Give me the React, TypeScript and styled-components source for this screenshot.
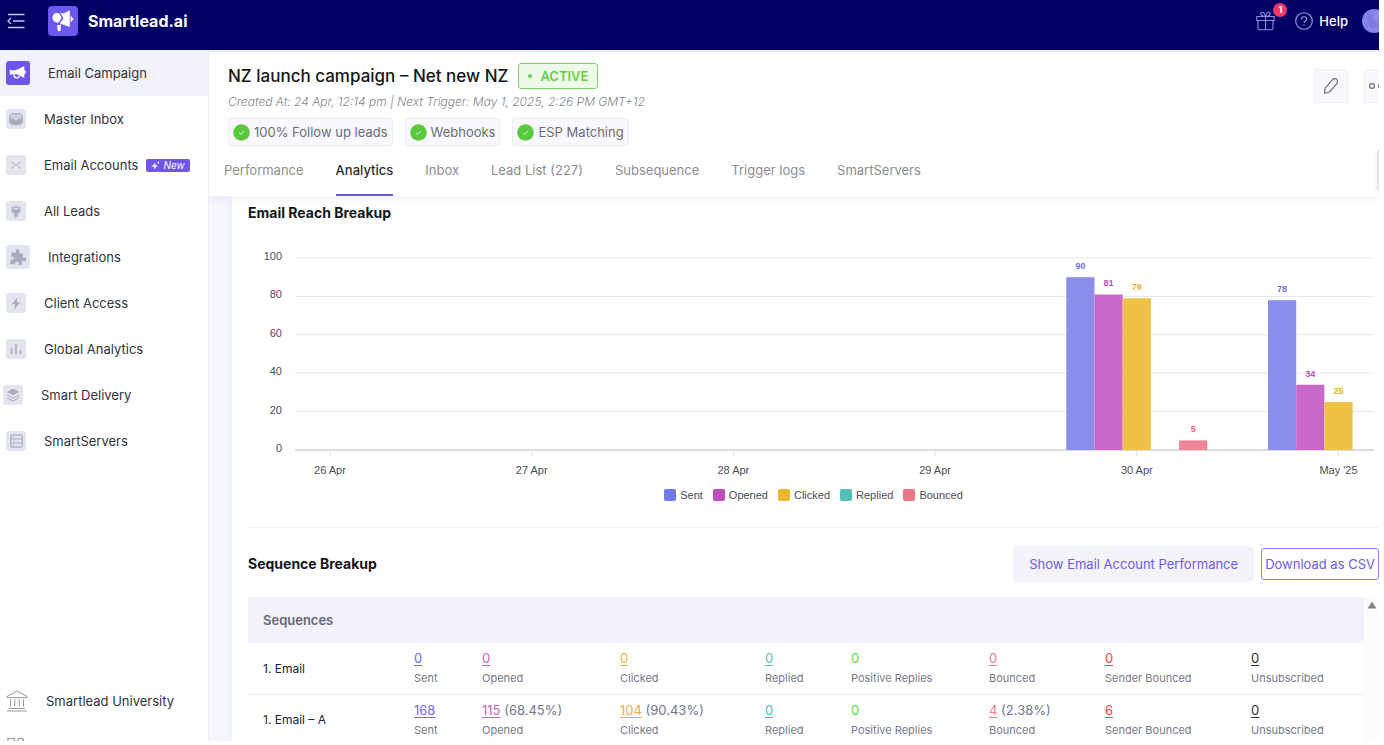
import React from "react";
import styled, { createGlobalStyle } from "styled-components";

const sans = `Inter, "Liberation Sans", sans-serif`;
const plain = `"Liberation Sans", Arial, sans-serif`;

const GlobalStyle = createGlobalStyle`
  *, *::before, *::after { box-sizing: border-box; }
  body { margin: 0; background: #fff; font-family: ${sans}; font-size: 14px; color: #2e323c; }
  button { font-family: inherit; cursor: pointer; }
  a { text-decoration: none; }
  svg { display: block; flex: none; }
`;

const Shell = styled.div`
  display: flex;
  flex-direction: column;
  height: 100vh;
  padding: 0 5px 4px 0;
  overflow: hidden;
`;

const TopBar = styled.header`
  flex: none;
  display: flex;
  align-items: center;
  height: 50px;
  padding: 0 0 8px 6px;
  background: #010163;
  color: #fff;
  overflow: hidden;
`;

const BareButton = styled.button`
  position: relative;
  display: flex;
  align-items: center;
  gap: 6px;
  padding: 0;
  border: 0;
  background: none;
  color: inherit;
  font-size: 13px;
  font-weight: 500;
`;

const Brand = styled.a`
  display: flex;
  align-items: center;
  gap: 10px;
  margin-left: 22px;
  color: #fff;
  font-size: 16px;
  font-weight: 700;
`;

const TopActions = styled.div`
  display: flex;
  align-items: center;
  margin-left: auto;
  margin-right: -7px;
`;

const HelpButton = styled(BareButton)`
  margin: 0 14px 0 20px;
`;

const CountBadge = styled.span`
  position: absolute;
  top: -8px;
  right: -12px;
  width: 14px;
  height: 14px;
  border-radius: 50%;
  background: #fb3767;
  font-size: 9px;
  line-height: 14px;
  font-weight: 700;
  text-align: center;
`;

const Body = styled.div`
  flex: 1;
  display: flex;
  min-height: 0;
`;

const Sidebar = styled.nav`
  flex: none;
  display: flex;
  flex-direction: column;
  width: 209px;
  border-right: 1px solid #ededf3;
  overflow: hidden;
`;

const NavGroup = styled.div<{ $bottom?: boolean }>`
  flex: none;
  margin-top: ${(p) => (p.$bottom ? "auto" : "0")};
  margin-bottom: ${(p) => (p.$bottom ? "-29px" : "0")};
`;

const NavItem = styled.a<{ $active?: boolean; $inset?: number }>`
  display: flex;
  align-items: center;
  gap: 18px;
  height: 46px;
  padding-left: ${(p) => p.$inset ?? 6}px;
  background: ${(p) => (p.$active ? "#f2f2fb" : "transparent")};
  color: #30343e;
  font-size: 13px;
`;

const NavText = styled.span`
  display: flex;
  align-items: center;
  gap: 8px;
  white-space: nowrap;
`;

const NewTag = styled.span`
  display: flex;
  align-items: center;
  gap: 3px;
  height: 13px;
  padding: 0 5px;
  border-radius: 2px;
  background: #6e56e8;
  color: #fff;
  font-size: 10px;
  font-style: italic;
`;

const Tile = styled.span<{ $large?: boolean; $active?: boolean }>`
  display: grid;
  place-items: center;
  width: ${(p) => (p.$large ? 24 : 20)}px;
  height: ${(p) => (p.$large ? 24 : 20)}px;
  border-radius: 3px;
  background: ${(p) => (p.$active ? "#6e56e8" : "#e3e4ee")};
  color: ${(p) => (p.$active ? "#fff" : "#a9abc0")};
`;

const Main = styled.main`
  flex: 1;
  display: flex;
  flex-direction: column;
  min-width: 0;
  overflow: hidden;
  background: #f6f7fd;
`;

const CampaignHead = styled.section`
  position: relative;
  flex: none;
  display: flex;
  justify-content: space-between;
  height: 146px;
  border-top: 2px solid #e9f0fc;
  background: #fff;
  box-shadow: 0 2px 8px rgba(40, 40, 80, 0.07);
  z-index: 1;
`;

const HeadInfo = styled.div`
  display: flex;
  flex-direction: column;
  padding: 11px 0 0 19px;
`;

const TitleRow = styled.div`
  display: flex;
  align-items: center;
  gap: 10px;
`;

const Title = styled.h1`
  margin: 0;
  color: #14151a;
  font-size: 17px;
  line-height: 25px;
  font-weight: 500;
  white-space: nowrap;
`;

const StatusBadge = styled.span`
  display: flex;
  align-items: center;
  gap: 8px;
  height: 26px;
  padding: 0 9px;
  border: 1px solid #7fd366;
  border-radius: 3px;
  background: #eefbe9;
  color: #66cf48;
  font-size: 13px;
  font-weight: 600;

  &::before {
    content: "";
    width: 4px;
    height: 4px;
    border-radius: 50%;
    background: currentColor;
  }
`;

const Meta = styled.p`
  margin: 5px 0 8px;
  color: #85868c;
  font-size: 12px;
  line-height: 16px;
  font-style: italic;
  font-weight: 300;
  white-space: nowrap;
`;

const Chips = styled.div`
  display: flex;
  gap: 12px;
`;

const Chip = styled.span`
  display: flex;
  align-items: center;
  gap: 4px;
  height: 28px;
  padding: 0 4px;
  border: 1px solid #ebebf2;
  border-radius: 4px;
  background: #f9f9fd;
  color: #6b6c78;
  font-size: 13px;
  white-space: nowrap;
`;

const Tabs = styled.nav`
  display: flex;
  gap: 32px;
  margin: auto 0 0 -4px;
`;

const Tab = styled.a<{ $active?: boolean }>`
  height: 38px;
  border-bottom: 2px solid ${(p) => (p.$active ? "#6e56d8" : "transparent")};
  color: ${(p) => (p.$active ? "#2b2d38" : "#8d8d92")};
  font-size: 13px;
  line-height: 24px;
  font-weight: ${(p) => (p.$active ? 500 : 400)};
  white-space: nowrap;
`;

const HeadActions = styled.div`
  display: flex;
  gap: 16px;
  margin: 17px -19px 0 0;
`;

const SquareButton = styled.button`
  display: grid;
  place-items: center;
  width: 34px;
  height: 34px;
  padding: 0;
  border: 1px solid #efeff6;
  border-radius: 2px;
  background: #f9f9fd;
  color: #6c6c86;
`;

const SideHandle = styled.span`
  position: absolute;
  right: 0;
  top: 98px;
  width: 2px;
  height: 40px;
  background: #e4e4e7;
  box-shadow: 0 0 4px rgba(0, 0, 0, 0.12);
`;

const Card = styled.div`
  flex: none;
  margin-left: 23px;
  padding-left: 16px;
  background: #fff;
  box-shadow: 0 0 12px rgba(80, 90, 150, 0.08);
`;

const SectionTitle = styled.h2`
  margin: 0;
  color: #14151a;
  font-size: 14px;
  line-height: 20px;
  font-weight: 700;
`;

const ChartSection = styled.section`
  padding-top: 7px;
  border-bottom: 1px solid #f0f0f3;
`;

const Chart = styled.svg`
  width: 100%;
  height: auto;
  font-family: ${plain};
`;

const Legend = styled.ul`
  display: flex;
  justify-content: center;
  gap: 10px;
  margin: 0;
  padding: 0 0 25px;
  list-style: none;
  color: #4b4d52;
  font-family: ${plain};
  font-size: 11px;
  line-height: 14px;
`;

const LegendItem = styled.li<{ $color: string }>`
  display: flex;
  align-items: center;
  gap: 4px;

  &::before {
    content: "";
    width: 12px;
    height: 12px;
    border-radius: 2px;
    background: ${(p) => p.$color};
  }
`;

const SequenceBar = styled.div`
  display: flex;
  align-items: center;
  gap: 7px;
  height: 69px;
  padding-top: 2px;

  ${SectionTitle} { margin-right: auto; }
`;

const ActionButton = styled.button<{ $outline?: boolean }>`
  height: ${(p) => (p.$outline ? 32 : 36)}px;
  padding: 0 ${(p) => (p.$outline ? 3 : 15)}px;
  border: 1px solid ${(p) => (p.$outline ? "#8f7df0" : "#f3f3fb")};
  border-radius: 3px;
  background: ${(p) => (p.$outline ? "#fff" : "#f3f3fb")};
  color: #6f5be0;
  font-size: 13px;
  white-space: nowrap;
`;

const TableArea = styled.div`
  display: flex;
`;

const ScrollRail = styled.div`
  flex: none;
  width: 15px;
  padding: 4px 0 0 3px;
  background: #fcfcfc;
`;

const Table = styled.table`
  flex: 1;
  width: 100%;
  table-layout: fixed;
  border-collapse: collapse;
`;

const HeadCell = styled.th`
  height: 46px;
  padding: 0 0 0 15px;
  background: #f2f2fb;
  color: #666877;
  font-size: 13px;
  font-weight: 600;
  text-align: left;
`;

const NameCell = styled.th`
  height: 51px;
  padding: 0 0 0 15px;
  border-bottom: 1px solid #ededf0;
  color: #22242b;
  font-size: 12px;
  font-weight: 400;
  text-align: left;
`;

const StatCell = styled.td`
  padding: 0;
  border-bottom: 1px solid #ededf0;
  white-space: nowrap;
`;

const Value = styled.div`
  color: #74768a;
  font-size: 13px;
  line-height: 20px;
`;

const ValueLink = styled.a<{ $color: string }>`
  color: ${(p) => p.$color};
  text-decoration: underline;
  text-underline-offset: 2px;
`;

const ValueText = styled.span<{ $color: string }>`
  color: ${(p) => p.$color};
`;

const StatLabel = styled.div`
  color: #777988;
  font-size: 11px;
  line-height: 20px;
`;

/* ---------- icons ---------- */

const MenuIcon = () => (
  <svg width="20" height="16" viewBox="0 0 20 16" fill="none" stroke="#c5c6ee" strokeWidth="1.3">
    <path d="M2 1.5h16.5M7 8h11.5M2 14.5h16.5M5 5 2 8l3 3" />
  </svg>
);

const LogoIcon = () => (
  <svg width="30" height="30" viewBox="0 0 30 30">
    <rect width="30" height="30" rx="4" fill="#6c58f0" />
    <g fill="#fff">
      <path d="M4.500 11.600C4.500 8.800 6.500 6.900 9 6.900c1 0 1.900.3 2.600.8L13.600 11.800 10.800 16.600C7.500 17.300 4.500 15 4.500 11.600Z" />
      <path d="M12.300 6.600 15.500 7.600 21.800 4.200V21L11.800 17.600 15.500 12.200Z" />
      <path d="M22.600 9.600 25.600 13.200 22.600 16.600Z" />
      <path d="M9 19.300 12.800 18.600V24q0 1.300-1.600 1.300T9.500 24Z" />
    </g>
  </svg>
);

const GiftIcon = () => (
  <svg width="19" height="20" viewBox="0 0 19 20" fill="none" stroke="#8f8fe0" strokeWidth="1.1">
    <path d="M.8 5.500h17.400v4H.8ZM2 9.500h15v7.500q0 1.800-1.800 1.800H3.800Q2 18.800 2 17ZM9.500 5.500v13.300M9.500 5.500C4 5.500 4 1.200 6.300 1.200S9.500 5.500 9.500 5.500s1-4.300 3.200-4.300S15 5.500 9.500 5.500Z" />
  </svg>
);

const HelpIcon = () => (
  <svg width="18" height="18" viewBox="0 0 18 18" fill="none" stroke="#a5a5e8" strokeWidth="1.1">
    <circle cx="9" cy="9" r="8.300" />
    <path d="M6.500 7.200C6.500 3.900 11.600 4 11.600 7 11.600 8.900 9 8.900 9 11M9 12.300v1.300" />
  </svg>
);

const Avatar = () => (
  <svg width="24" height="24" viewBox="0 0 24 24">
    <circle cx="12" cy="12" r="12" fill="#8682e6" />
    <path d="M5 5q5 1 6 7l6 4-7 4q-4-6-5-15Z" fill="#7c78e0" />
    <path d="M13 2l6 3v7l-6-3Z" fill="#918eed" />
  </svg>
);

const MegaphoneGlyph = () => (
  <svg width="18" height="14" viewBox="0 0 18 14" fill="currentColor">
    <path d="M.8 3.600 2.800 4.500C7 4.500 11 3 14 .6h1.300v3.300c2 .5 2 3.800 0 4.300v3.300H14C12 10 9.700 8.900 7.500 8.300L2.800 8.200.8 9.200Z" />
    <path d="M5 8.300c-.6 4 5 4.800 5.400 1.200" fill="none" stroke="currentColor" strokeWidth="1.300" />
  </svg>
);

const InboxGlyph = () => (
  <svg width="14" height="12" viewBox="0 0 14 12">
    <rect x=".6" y=".6" width="12.800" height="10.800" rx="3.500" fill="#cfd0de" stroke="#a9abc0" />
    <path d="M.6 5.500h3.600q.7 2 2.800 2t2.800-2h3.600v3q0 3-3 3H3.600q-3 0-3-3Z" fill="currentColor" />
  </svg>
);

const MailGlyph = () => (
  <svg width="12" height="10" viewBox="0 0 12 10" fill="none" stroke="currentColor">
    <path d="M.8 1.500 6 5.500l5.200-4M.8 9 4 6M11.200 9 8 6" />
  </svg>
);

const FunnelGlyph = () => (
  <svg width="12" height="13" viewBox="0 0 12 13" fill="currentColor">
    <path d="M1 4.500h10q0 2.700-3.200 4.200v2.500L4.500 13V8.700Q1 7.500 1 4.500Z" />
    <circle cx="3" cy="2.800" r="1.300" />
    <circle cx="6" cy="1.700" r="1.300" />
    <circle cx="9" cy="2.800" r="1.300" />
  </svg>
);

const PuzzleGlyph = () => (
  <svg width="17" height="17" viewBox="0 0 17 17" fill="currentColor">
    <path d="M1 4.300h4.200C4 1.500 5.200.5 6.600.5s2.700 1 1.500 3.200l4.500.6v4c2.400-1.200 3.900-.3 3.900 1.300s-1.500 2.500-3.900 1.400V16H9.200c.8-2.200-.2-3.400-1.500-3.400S5.300 14 6 16H1v-4.200c2 .3 2.900-.6 2.900-1.800S3 8.200 1 8.600Z" transform="rotate(8 8.500 8.500)" />
  </svg>
);

const BoltGlyph = () => (
  <svg width="10" height="13" viewBox="0 0 10 13" fill="currentColor">
    <path d="M6.500.3.800 7.200h3.500L3 12.700l6.200-7.200H5.600Z" />
  </svg>
);

const BarsGlyph = () => (
  <svg width="12" height="12" viewBox="0 0 12 12" fill="none" stroke="currentColor" strokeWidth="1.600" strokeLinecap="round">
    <path d="M1.500 6v4.500M6 1.500v9M10.500 7.500v3" />
  </svg>
);

const LayersGlyph = () => (
  <svg width="14" height="14" viewBox="0 0 14 14">
    <path d="M7 .8 13.200 4 7 7.200.8 4Z" fill="currentColor" />
    <path d="M.8 7 7 10.200 13.200 7M.8 9.800 7 13l6.200-3.200" fill="none" stroke="currentColor" />
  </svg>
);

const ServerGlyph = () => (
  <svg width="13" height="14" viewBox="0 0 13 14" fill="none" stroke="currentColor" strokeWidth="1.200">
    <rect x=".8" y=".8" width="11.400" height="12.400" rx="1.500" />
    <path d="M.8 5h11.400M.8 9h11.400M3 3h1.200M3 7h1.200M3 11.200h1.200" />
  </svg>
);

const UniversityIcon = () => (
  <svg width="22" height="22" viewBox="0 0 22 22" fill="none" stroke="#96989f" strokeWidth="1">
    <path d="M1 6.500 11 1l10 5.500v1.200H1ZM4.500 9.500v7M8.800 9.500v7M13.200 9.500v7M17.500 9.500v7M3 18.500h16M1 21h20" />
  </svg>
);

const AppsIcon = () => (
  <svg width="22" height="22" viewBox="0 0 22 22" fill="none" stroke="#96989f" strokeWidth="1.200">
    <rect x="2" y="2.500" width="6.500" height="6.500" />
    <circle cx="14.500" cy="5.700" r="3.300" />
    <rect x="2" y="12.500" width="6.500" height="6.500" />
    <rect x="11.300" y="12.500" width="6.500" height="6.500" />
  </svg>
);

const SparkleIcon = () => (
  <svg width="9" height="9" viewBox="0 0 9 9" fill="#fff">
    <path d="M3.700 1.500 4.600 4 7.200 5 4.600 5.900 3.700 8.500 2.800 5.900.2 5 2.800 4ZM7.300.2 7.700 1.300 8.800 1.800 7.700 2.200 7.300 3.300 6.900 2.200 5.800 1.800 6.900 1.300Z" />
  </svg>
);

const CheckIcon = () => (
  <svg width="17" height="17" viewBox="0 0 17 17">
    <circle cx="8.500" cy="8.500" r="8.300" fill="#5ac83c" />
    <path d="M6 8.700 7.800 10.300 11 7" fill="none" stroke="#d9f5d1" strokeWidth="1" />
  </svg>
);

const PencilIcon = () => (
  <svg width="16" height="18" viewBox="0 0 16 18" fill="none" stroke="currentColor" strokeWidth="1.200">
    <path d="M1.500 16.300 1.900 11.700 9.800 2.300Q10.300 1.700 11.200 1.700L13.300 2Q14.500 2.900 14.500 4.200L14.200 6.200 6.500 15Z" />
  </svg>
);

const MoreIcon = () => (
  <svg width="26" height="8" viewBox="0 0 26 8" fill="none" stroke="currentColor" strokeWidth="1.200">
    <circle cx="4" cy="4" r="2.400" />
    <circle cx="13" cy="4" r="2.400" />
    <circle cx="22" cy="4" r="2.400" />
  </svg>
);

const ArrowUp = () => (
  <svg width="10" height="8" viewBox="0 0 10 8">
    <path d="M5 .5 9.500 7.500H.5Z" fill="#858588" />
  </svg>
);

/* ---------- data ---------- */

type NavEntry = { label: string; glyph: React.ReactNode; large?: boolean; active?: boolean; inset?: number; isNew?: boolean };

const navEntries: NavEntry[] = [
  { label: "Email Campaign", glyph: <MegaphoneGlyph />, large: true, active: true },
  { label: "Master Inbox", glyph: <InboxGlyph /> },
  { label: "Email Accounts", glyph: <MailGlyph />, isNew: true },
  { label: "All Leads", glyph: <FunnelGlyph /> },
  { label: "Integrations", glyph: <PuzzleGlyph />, large: true },
  { label: "Client Access", glyph: <BoltGlyph /> },
  { label: "Global Analytics", glyph: <BarsGlyph /> },
  { label: "Smart Delivery", glyph: <LayersGlyph />, inset: 3 },
  { label: "SmartServers", glyph: <ServerGlyph /> },
];

const chips = ["100% Follow up leads", "Webhooks", "ESP Matching"];
const tabs = ["Performance", "Analytics", "Inbox", "Lead List (227)", "Subsequence", "Trigger logs", "SmartServers"];

const series = [
  { name: "Sent", legend: "#7079e8", fill: "#8b8dea", text: "#6c6fe6" },
  { name: "Opened", legend: "#bd50bd", fill: "#c968c8", text: "#bb4cbb" },
  { name: "Clicked", legend: "#ecb52d", fill: "#efc246", text: "#e8ad2c" },
  { name: "Replied", legend: "#51bfba", fill: "#6fcac6", text: "#51bfba" },
  { name: "Bounced", legend: "#e87687", fill: "#ec8797", text: "#e8697d" },
];

const days = [
  { label: "26 Apr", values: [0, 0, 0, 0, 0] },
  { label: "27 Apr", values: [0, 0, 0, 0, 0] },
  { label: "28 Apr", values: [0, 0, 0, 0, 0] },
  { label: "29 Apr", values: [0, 0, 0, 0, 0] },
  { label: "30 Apr", values: [90, 81, 79, 0, 5] },
  { label: "May '25", values: [78, 34, 25, 0, 0] },
];

const columns = [
  { label: "Sent", color: "#7468e8", width: 68 },
  { label: "Opened", color: "#c763c4", width: 138 },
  { label: "Clicked", color: "#ecae3c", width: 145 },
  { label: "Replied", color: "#51bfb4", width: 86 },
  { label: "Positive Replies", color: "#52dc45", width: 138, plain: true },
  { label: "Bounced", color: "#ec7a90", width: 116 },
  { label: "Sender Bounced", color: "#f5404a", width: 146 },
  { label: "Unsubscribed", color: "#2c2c30" },
];

const rows: { name: string; cells: [string, string?][] }[] = [
  { name: "1. Email", cells: [["0"], ["0"], ["0"], ["0"], ["0"], ["0"], ["0"], ["0"]] },
  {
    name: "1. Email – A",
    cells: [["168"], ["115", "(68.45%)"], ["104", "(90.43%)"], ["0"], ["0"], ["4", "(2.38%)"], ["6"], ["0"]],
  },
];

/* ---------- chart ---------- */

const BASE = 227;
const UNIT = 1.92;
const BAR = 28.2;

const ReachChart = () => (
  <Chart viewBox="0 0 1131 265" role="img" aria-label="Email reach by day">
    {[0, 20, 40, 60, 80, 100].map((v) => (
      <g key={v}>
        <line x1="47" x2="1126" y1={BASE - v * UNIT} y2={BASE - v * UNIT} stroke={v ? "#e6e6e9" : "#dcdce0"} strokeWidth={v ? 1 : 2} />
        <text x="34" y={BASE - v * UNIT + 2} textAnchor="end" fontSize="11" fill="#4b4d52">
          {v}
        </text>
      </g>
    ))}
    {days.map((day, d) => {
      const tick = 82 + d * 201.7;
      return (
        <g key={day.label}>
          <line x1={tick} x2={tick} y1={BASE} y2={BASE + 6} stroke="#e0e0e4" />
          <text x={tick} y={BASE + 24} textAnchor="middle" fontSize="11" fill="#4b4d52">
            {day.label}
          </text>
          {day.values.map((v, s) => {
            const x = tick + (s - 2.5) * BAR;
            return v ? (
              <g key={series[s].name}>
                <rect x={x} y={BASE - v * UNIT} width={BAR} height={v * UNIT} fill={series[s].fill} />
                <text x={x + BAR / 2} y={BASE - v * UNIT - 8} textAnchor="middle" fontSize="9" fontWeight="700" fill={series[s].text}>
                  {v}
                </text>
              </g>
            ) : null;
          })}
        </g>
      );
    })}
  </Chart>
);

export default function App() {
  return (
    <Shell>
      <GlobalStyle />
      <TopBar>
        <BareButton aria-label="Collapse menu">
          <MenuIcon />
        </BareButton>
        <Brand href="#">
          <LogoIcon />
          Smartlead.ai
        </Brand>
        <TopActions>
          <BareButton aria-label="Rewards">
            <GiftIcon />
            <CountBadge>1</CountBadge>
          </BareButton>
          <HelpButton>
            <HelpIcon />
            Help
          </HelpButton>
          <BareButton aria-label="Account">
            <Avatar />
          </BareButton>
        </TopActions>
      </TopBar>
      <Body>
        <Sidebar aria-label="Main">
          <NavGroup>
            {navEntries.map((n) => (
              <NavItem key={n.label} href="#" $active={n.active} $inset={n.inset}>
                <Tile $large={n.large} $active={n.active}>
                  {n.glyph}
                </Tile>
                <NavText>
                  {n.label}
                  {n.isNew && (
                    <NewTag>
                      <SparkleIcon />
                      New
                    </NewTag>
                  )}
                </NavText>
              </NavItem>
            ))}
          </NavGroup>
          <NavGroup $bottom>
            <NavItem href="#">
              <UniversityIcon />
              Smartlead University
            </NavItem>
            <NavItem href="#" aria-label="Apps">
              <AppsIcon />
            </NavItem>
          </NavGroup>
        </Sidebar>
        <Main>
          <CampaignHead>
            <HeadInfo>
              <TitleRow>
                <Title>NZ launch campaign – Net new NZ</Title>
                <StatusBadge>ACTIVE</StatusBadge>
              </TitleRow>
              <Meta>Created At: 24 Apr, 12:14 pm | Next Trigger: May 1, 2025, 2:26 PM GMT+12</Meta>
              <Chips>
                {chips.map((c) => (
                  <Chip key={c}>
                    <CheckIcon />
                    {c}
                  </Chip>
                ))}
              </Chips>
              <Tabs aria-label="Campaign">
                {tabs.map((t) => (
                  <Tab key={t} href="#" $active={t === "Analytics"}>
                    {t}
                  </Tab>
                ))}
              </Tabs>
            </HeadInfo>
            <HeadActions>
              <SquareButton aria-label="Edit">
                <PencilIcon />
              </SquareButton>
              <SquareButton aria-label="More">
                <MoreIcon />
              </SquareButton>
            </HeadActions>
            <SideHandle />
          </CampaignHead>
          <Card>
            <ChartSection>
              <SectionTitle>Email Reach Breakup</SectionTitle>
              <ReachChart />
              <Legend>
                {series.map((s) => (
                  <LegendItem key={s.name} $color={s.legend}>
                    {s.name}
                  </LegendItem>
                ))}
              </Legend>
            </ChartSection>
            <SequenceBar>
              <SectionTitle>Sequence Breakup</SectionTitle>
              <ActionButton>Show Email Account Performance</ActionButton>
              <ActionButton $outline>Download as CSV</ActionButton>
            </SequenceBar>
            <TableArea>
              <Table>
                <colgroup>
                  <col width={166} />
                  {columns.map((c) => (
                    <col key={c.label} width={c.width} />
                  ))}
                </colgroup>
                <thead>
                  <tr>
                    <HeadCell colSpan={9}>Sequences</HeadCell>
                  </tr>
                </thead>
                <tbody>
                  {rows.map((r) => (
                    <tr key={r.name}>
                      <NameCell scope="row">{r.name}</NameCell>
                      {r.cells.map(([count, rate], i) => (
                        <StatCell key={columns[i].label}>
                          <Value>
                            {columns[i].plain ? (
                              <ValueText $color={columns[i].color}>{count}</ValueText>
                            ) : (
                              <ValueLink href="#" $color={columns[i].color}>
                                {count}
                              </ValueLink>
                            )}
                            {rate && ` ${rate}`}
                          </Value>
                          <StatLabel>{columns[i].label}</StatLabel>
                        </StatCell>
                      ))}
                    </tr>
                  ))}
                </tbody>
              </Table>
              <ScrollRail>
                <ArrowUp />
              </ScrollRail>
            </TableArea>
          </Card>
        </Main>
      </Body>
    </Shell>
  );
}
